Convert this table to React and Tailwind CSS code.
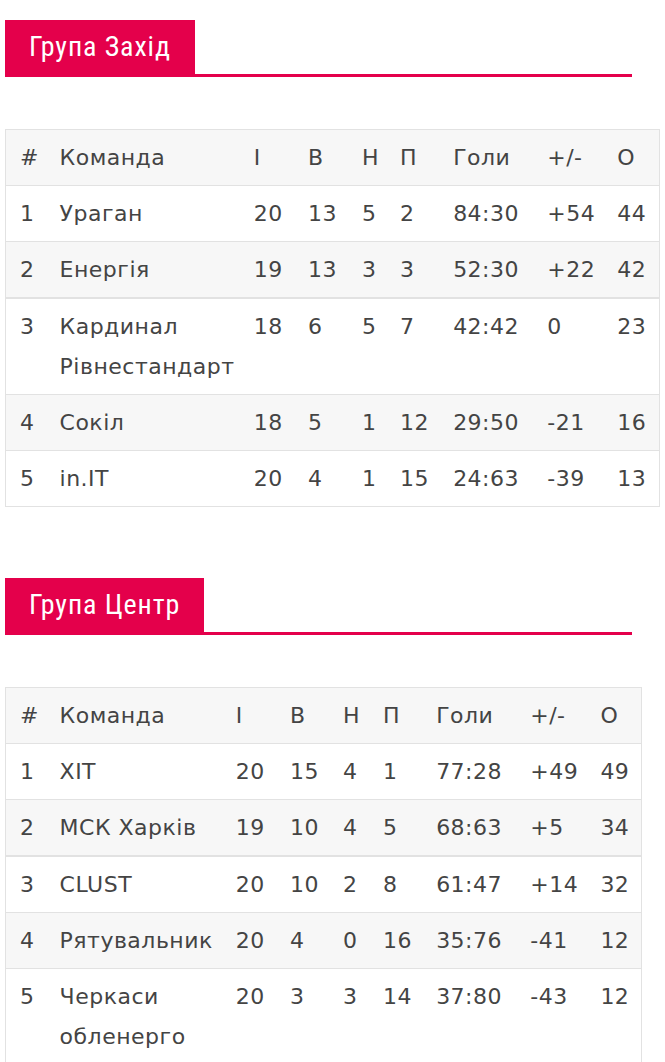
import React from "react";

const groups = [
  {
    title: "Група Захід",
    tableW: "w-[655px]",
    cols: ["w-[40px]", "w-[194px]", "w-[54px]", "w-[54px]", "w-[38px]", "w-[53px]", "w-[94px]", "w-[70px]", "w-[56px]"],
    rows: [
      ["1", "Ураган", "20", "13", "5", "2", "84:30", "+54", "44"],
      ["2", "Енергія", "19", "13", "3", "3", "52:30", "+22", "42"],
      ["3", "Кардинал Рівнестандарт", "18", "6", "5", "7", "42:42", "0", "23"],
      ["4", "Сокіл", "18", "5", "1", "12", "29:50", "-21", "16"],
      ["5", "in.IT", "20", "4", "1", "15", "24:63", "-39", "13"],
    ],
  },
  {
    title: "Група Центр",
    tableW: "w-[637px]",
    cols: ["w-[40px]", "w-[176px]", "w-[54px]", "w-[53px]", "w-[40px]", "w-[53px]", "w-[94px]", "w-[70px]", "w-[55px]"],
    rows: [
      ["1", "ХІТ", "20", "15", "4", "1", "77:28", "+49", "49"],
      ["2", "МСК Харків", "19", "10", "4", "5", "68:63", "+5", "34"],
      ["3", "CLUST", "20", "10", "2", "8", "61:47", "+14", "32"],
      ["4", "Рятувальник", "20", "4", "0", "16", "35:76", "-41", "12"],
      ["5", "Черкаси обленерго", "20", "3", "3", "14", "37:80", "-43", "12"],
    ],
  },
];

const heads = ["#", "Команда", "І", "В", "Н", "П", "Голи", "+/-", "О"];

const GroupTitle = ({ children }) => (
  <div className="w-[627px] border-b-[3px] border-[#e4004b]">
    <span className="inline-block bg-[#e4004b] px-[24px] text-white text-[28px] leading-[54px] tracking-[0.9px] font-['Roboto_Condensed','Liberation_Sans_Narrow',Roboto,sans-serif] align-bottom -mb-[3px] pb-[3px]">
      {children}
    </span>
  </div>
);

const Standings = ({ group }) => (
  <table
    className={`${group.tableW} table-fixed border-collapse border border-[#e2e2e2] text-[#444] text-[22px] tracking-[0.5px] leading-[40px] font-['DejaVu_Sans','Verdana',sans-serif]`}
  >
    <colgroup>
      {group.cols.map((c, i) => (
        <col key={i} className={c} />
      ))}
    </colgroup>
    <thead>
      <tr className="bg-[#f7f7f7] border-b border-[#e2e2e2]">
        {heads.map((h) => (
          <th key={h} className="pl-[14px] pt-2 pb-[7px] text-left font-normal">
            {h}
          </th>
        ))}
      </tr>
    </thead>
    <tbody>
      {group.rows.map((r, i) => (
        <tr
          key={i}
          className={`${i % 2 === 1 ? "bg-[#f7f7f7]" : "bg-white"} ${
            i === 2 ? "border-t-2 border-t-[#e2e2e2]" : ""
          } border-b border-[#e2e2e2]`}
        >
          {r.map((c, j) => (
            <td key={j} className="pl-[14px] pt-2 pb-[7px] align-top">
              {c}
            </td>
          ))}
        </tr>
      ))}
    </tbody>
  </table>
);

export default function App() {
  return (
    <div className="bg-white w-[665px] pl-[5px] pt-[20px]">
      <GroupTitle>{groups[0].title}</GroupTitle>
      <div className="mt-[52px]">
        <Standings group={groups[0]} />
      </div>
      <div className="mt-[71px]">
        <GroupTitle>{groups[1].title}</GroupTitle>
      </div>
      <div className="mt-[52px]">
        <Standings group={groups[1]} />
      </div>
    </div>
  );
}
